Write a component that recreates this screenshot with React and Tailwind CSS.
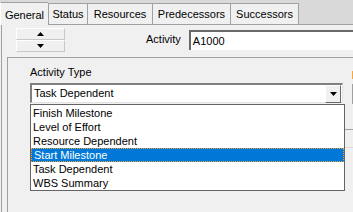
import React from "react";

const tabs = [
  { label: "General", w: "w-[48px]", active: true },
  { label: "Status", w: "w-[39px]" },
  { label: "Resources", w: "w-[65px]" },
  { label: "Predecessors", w: "w-[78px]" },
  { label: "Successors", w: "w-[69px]" },
];

const items = [
  "Finish Milestone",
  "Level of Effort",
  "Resource Dependent",
  "Start Milestone",
  "Task Dependent",
  "WBS Summary",
];

function Tri({ down }) {
  return (
    <svg width="7" height="4" viewBox="0 0 7 4" className="block">
      {down ? <path d="M0 0H7L3.5 4Z" fill="#000" /> : <path d="M0 4H7L3.5 0Z" fill="#000" />}
    </svg>
  );
}

export default function App() {
  return (
    <div
      className="relative w-[353px] h-[212px] overflow-hidden bg-[#f0f0f0] text-[11px] leading-[13px] text-black"
      style={{ fontFamily: '"Liberation Sans", Arial, sans-serif' }}
    >
      {/* Tab strip */}
      <div className="flex items-end h-[25px] bg-[#d9d9d9] border-b border-[#a0a0a0]">
        {tabs.map((t, i) => (
          <div
            key={t.label}
            className={`${t.w} shrink-0 flex items-center justify-center bg-[#f0f0f0] border-t border-[#a0a0a0] ${
              i === 0 ? "border-l border-l-white h-[23px] -mb-px" : "border-l h-[21px]"
            } ${i === tabs.length - 1 ? "border-r" : ""}`}
          >
            <span className={i === 0 ? "pt-[2px]" : "pt-[1px]"}>{t.label}</span>
          </div>
        ))}
      </div>

      {/* Page */}
      <div className="ml-[1px] h-[187px] border-l border-[#a0a0a0] flex flex-col">
        {/* Header row */}
        <div className="flex h-[31px] pt-[3px]">
          <div className="ml-[14px] w-[49px] h-[24px] flex flex-col">
            <div className="h-[12px] flex items-center justify-center bg-[#f0f0f0] border border-t-white border-l-white border-r-[#c8c8c8] border-b-[#c8c8c8]">
              <Tri />
            </div>
            <div className="h-[12px] flex items-center justify-center bg-[#f0f0f0] border border-t-white border-l-white border-r-[#c8c8c8] border-b-[#c8c8c8]">
              <Tri down />
            </div>
          </div>
          <div className="ml-[81px] pt-[5px] leading-[13px]">Activity</div>
          <div className="ml-[8px] mt-[2px] flex-1 h-[20px] bg-white border-t-2 border-l-2 border-t-[#696969] border-l-[#696969] flex items-center pl-[2px]">
            A1000
          </div>
        </div>

        {/* Group box */}
        <div className="ml-[5px] mt-[1px] flex-1 border-t border-l border-[#a0a0a0] flex">
          <div className="pl-[22px] pt-[8px] w-[337px] shrink-0">
            <div className="h-[13px]">Activity Type</div>
            <div className="mt-[4px] w-[313px] h-[20px] bg-white border-t-2 border-l-2 border-t-[#808080] border-l-[#808080] border-b border-r border-b-[#e3e3e3] border-r-[#e3e3e3] flex items-center">
              <span className="pl-[2px] flex-1">Task Dependent</span>
              <div className="w-[16px] h-[18px] mr-px flex items-center justify-center bg-[#f0f0f0] border border-t-white border-l-white border-r-[#696969] border-b-[#696969]">
                <Tri down />
              </div>
            </div>
          </div>
          <div className="flex-1 relative">
            <div className="absolute left-[7px] top-[13px] w-[3px] h-[8px] bg-[#f4a640]" />
            <div className="absolute left-[7px] top-[26px] w-[3px] h-[20px] border-l border-[#a0a0a0]" />
            <div className="absolute left-0 top-[71px] w-[20px] border-t border-[#a0a0a0]" />
            <div className="absolute left-0 top-[89px] w-[20px] border-t border-[#dcdcdc]" />
          </div>
        </div>
      </div>

      {/* Dropdown list overlay */}
      <div className="absolute left-[30px] top-[104px] w-[315px] h-[87px] bg-white border border-[#646464] pt-px">
        {items.map((it) => {
          const sel = it === "Start Milestone";
          return (
            <div
              key={it}
              className={`h-[14px] flex items-center pl-[2px] ${
                sel ? "bg-[#0078d7] text-white border border-dotted border-[#f0a030] pl-[1px]" : ""
              }`}
            >
              {it}
            </div>
          );
        })}
      </div>
    </div>
  );
}
